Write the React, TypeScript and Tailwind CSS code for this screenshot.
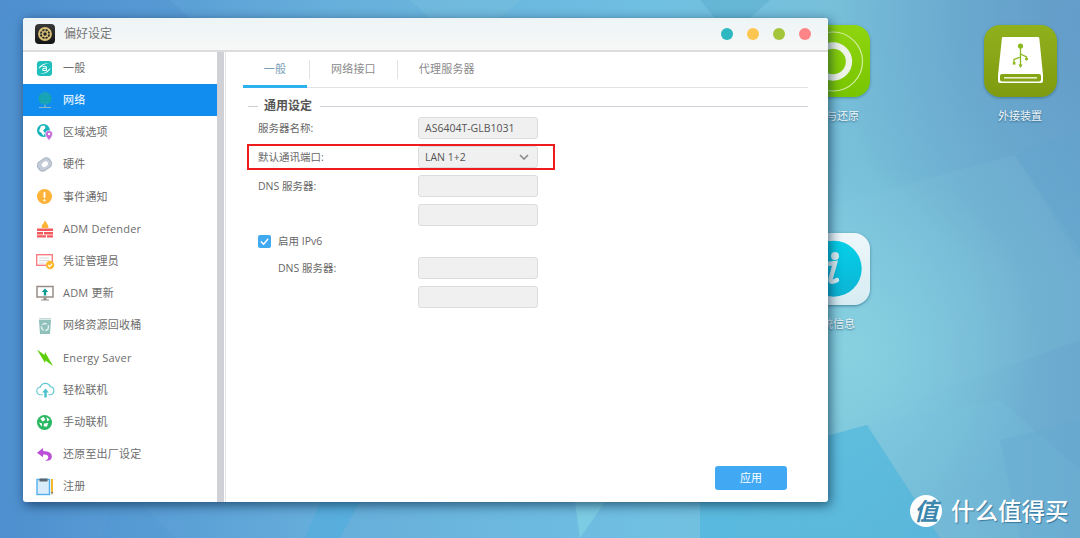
import type { ReactNode } from 'react';

const FONT = "font-['Open_Sans','Noto_Sans_CJK_SC',sans-serif]";

function Wallpaper() {
  return (
    <svg className="absolute inset-0 h-full w-full" viewBox="0 0 1080 538" preserveAspectRatio="none">
      <defs>
        <linearGradient id="wall" x1="0" y1="0" x2="1" y2="0">
          <stop offset="0" stopColor="#4e8fcf" />
          <stop offset="0.3" stopColor="#66aedb" />
          <stop offset="0.6" stopColor="#70c0e2" />
          <stop offset="0.78" stopColor="#78c0da" />
          <stop offset="1" stopColor="#6ba9ce" />
        </linearGradient>
        <radialGradient id="glow" gradientUnits="userSpaceOnUse" cx="850" cy="350" r="190">
          <stop offset="0" stopColor="#8cd8e4" stopOpacity="0.75" />
          <stop offset="1" stopColor="#8cd8e4" stopOpacity="0" />
        </radialGradient>
        <radialGradient id="shade" gradientUnits="userSpaceOnUse" cx="1080" cy="20" r="260">
          <stop offset="0" stopColor="#5f97c6" stopOpacity="0.7" />
          <stop offset="1" stopColor="#5f97c6" stopOpacity="0" />
        </radialGradient>
      </defs>
      <rect width="1080" height="538" fill="url(#wall)" />
      <rect width="1080" height="538" fill="url(#glow)" />
      <rect width="1080" height="538" fill="url(#shade)" />
      <polygon points="700,240 1015,155 1080,250 1080,340 860,420 700,440" fill="#8ccfe0" opacity="0.12" />
      <polygon points="1015,155 1080,130 1080,260" fill="#5fa5cc" opacity="0.3" />
      <polygon points="700,470 867,425 940,538 700,538" fill="#50b6dd" opacity="0.7" />
      <polygon points="867,425 1000,400 1080,470 1080,538 940,538" fill="#78c2df" opacity="0.25" />
      <polygon points="1000,440 1080,420 1080,538 1020,538" fill="#64a8d0" opacity="0.35" />
      <polygon points="115,502 140,502 175,538 100,538" fill="#4f96d2" opacity="0.25" />
      <polygon points="320,502 360,502 340,538 305,538" fill="#48aede" opacity="0.45" />
      <polygon points="575,502 605,502 580,538" fill="#8adbe8" opacity="0.5" />
      <polygon points="0,0 170,0 190,18 0,18" fill="#4e8fd2" opacity="0.3" />
      <polygon points="410,0 520,0 500,18 430,18" fill="#80c8df" opacity="0.3" />
      <polygon points="700,0 770,0 750,18 715,18" fill="#52a8c8" opacity="0.4" />
    </svg>
  );
}

function BackupIcon() {
  return (
    <div className="absolute left-[790px] top-[25px] h-[72px] w-[80px] overflow-hidden rounded-[16px] bg-gradient-to-b from-[#8fd50f] to-[#78c500] shadow-[0_1px_3px_rgba(0,60,90,0.4)]">
      <svg className="h-full w-full" viewBox="0 0 80 72">
        <circle cx="43" cy="36.5" r="29.5" fill="none" stroke="#d3eda0" strokeWidth="1.2" />
        <circle cx="43" cy="36.5" r="16" fill="none" stroke="#eef3ea" strokeWidth="6.3" />
      </svg>
    </div>
  );
}

function UsbIcon() {
  return (
    <div className="absolute left-[984px] top-[25px] h-[72px] w-[73px] rounded-[16px] bg-gradient-to-b from-[#90b01c] to-[#7f9a10] shadow-[0_1px_3px_rgba(0,60,90,0.4)]">
      <svg className="h-full w-full" viewBox="0 0 73 72">
        <path d="M18 12.5 Q18 12 19 12 H54 Q55 12 55.3 13 L59 50 V56 Q59 58 57 58 H16 Q14 58 14 56 V50 Z" fill="#fff" />
        <rect x="16" y="49" width="41" height="7.5" rx="2" fill="#86a514" />
        <rect x="20" y="52" width="33" height="1.6" fill="#e8efc8" />
        <g stroke="#8ab81e" strokeWidth="1.3" fill="#8ab81e">
          <circle cx="36.5" cy="21" r="2.6" stroke="none" />
          <path d="M36.5 22 V40 M36.5 32 L30 34.5 V38 M36.5 29 L42.5 32 V34" fill="none" />
          <rect x="28.8" y="37" width="2.6" height="2.6" stroke="none" />
          <circle cx="42.5" cy="34" r="1.6" stroke="none" />
          <path d="M34.3 39.5 H38.7 L36.5 43 Z" stroke="none" />
        </g>
      </svg>
    </div>
  );
}

function InfoIcon() {
  return (
    <div className="absolute left-[790px] top-[233px] h-[72px] w-[80px] overflow-hidden rounded-[16px] bg-gradient-to-b from-[#eef7fa] to-[#d6ecf2] shadow-[0_1px_3px_rgba(0,60,90,0.5)]">
      <svg className="h-full w-full" viewBox="0 0 80 72">
        <defs>
          <linearGradient id="infoDisc" x1="0" y1="0" x2="0" y2="1">
            <stop offset="0" stopColor="#05d0e8" />
            <stop offset="1" stopColor="#0cb4d4" />
          </linearGradient>
        </defs>
        <circle cx="43.7" cy="35.7" r="28" fill="url(#infoDisc)" />
        <circle cx="45" cy="23" r="4" fill="#dceff4" />
        <path d="M37 31 L45 30 L40.5 46 Q39.5 51 47 47" fill="none" stroke="#dceff4" strokeWidth="4.4" strokeLinecap="round" />
      </svg>
    </div>
  );
}

function DesktopLabel({ className, children }: { className: string; children: ReactNode }) {
  return (
    <span className={`absolute text-[11px] leading-4 text-[#eef6fa] [text-shadow:0_1px_2px_rgba(0,50,80,0.6)] ${className}`}>
      {children}
    </span>
  );
}

const NAV_ICONS: Record<string, ReactNode> = {
  general: (
    <svg viewBox="0 0 18 18" className="h-[17px] w-[17px]">
      <rect x="1" y="1" width="16" height="16" rx="3.5" fill="#1fc0bb" />
      <path d="M2.5 9.5 Q4 3.5 14.5 3.2 Q7 4.5 5.5 7.5 Z M15.5 8.5 Q14.5 14.5 3.5 14.8 Q11 13.5 12.8 10.5 Z" fill="#fff" />
      <path d="M7 7.3 Q9 6 10.6 7 Q11.2 7.5 11 9 V11.5 M11 8.8 Q7 8.5 7 10.2 Q7.3 11.8 11 10.8" fill="none" stroke="#fff" strokeWidth="1.1" />
    </svg>
  ),
  network: (
    <svg viewBox="0 0 18 18" className="h-[18px] w-[18px]">
      <circle cx="9" cy="7.5" r="6.5" fill="#0fa6a8" />
      <path d="M2.5 7.5 H15.5 M9 1 V14 M4 3.5 H14 M4 11.5 H14" stroke="#2a9fd0" strokeWidth="0.6" fill="none" />
      <ellipse cx="9" cy="7.5" rx="3" ry="6.5" fill="none" stroke="#2a9fd0" strokeWidth="0.6" />
      <path d="M9 14 V16 M3 16.5 H15" stroke="#8ab6c8" strokeWidth="1.2" />
    </svg>
  ),
  region: (
    <svg viewBox="0 0 18 18" className="h-[18px] w-[18px]">
      <circle cx="7.5" cy="7.5" r="6.5" fill="#17b3bd" />
      <path d="M5 3 L8.5 2.5 L9.5 5 L7 7.5 L9 10 L7.5 13 L5.5 10 L3 8 Z" fill="#fff" />
      <path d="M13 7.5 A3.6 3.6 0 0 1 16.6 11 Q16.6 13 13 17.5 Q9.4 13 9.4 11 A3.6 3.6 0 0 1 13 7.5 Z" fill="#c468d8" stroke="#fff" strokeWidth="0.6" />
      <circle cx="13" cy="11" r="1.2" fill="#fff" />
    </svg>
  ),
  hardware: (
    <svg viewBox="0 0 18 18" className="h-[17px] w-[17px]">
      <g transform="rotate(-35 9 9)">
        <rect x="1.5" y="3.5" width="15" height="11" rx="4.5" fill="#c3cbd6" stroke="#aab6c4" strokeWidth="1.2" />
        <ellipse cx="9.5" cy="9" rx="3.6" ry="2.6" fill="#fff" />
      </g>
    </svg>
  ),
  notify: (
    <svg viewBox="0 0 18 18" className="h-[17px] w-[17px]">
      <circle cx="9" cy="9" r="8" fill="#fdb338" />
      <rect x="8" y="4" width="2" height="6.5" rx="1" fill="#fff" />
      <circle cx="9" cy="13" r="1.2" fill="#fff" />
    </svg>
  ),
  defender: (
    <svg viewBox="0 0 18 18" className="h-[18px] w-[18px]">
      <path d="M6 8 Q5 5 7 4 Q8 3 8.5 0.5 Q12 3 12.5 8 Z" fill="#fdb338" />
      <path d="M1 8.5 H17 V11 H1 Z M1 12 H7 V14.5 H1 Z M8 12 H17 V14.5 H8 Z M1 15.3 H10 V17.5 H1 Z M11 15.3 H17 V17.5 H11 Z" fill="#f2595d" />
    </svg>
  ),
  cert: (
    <svg viewBox="0 0 19 18" className="h-[18px] w-[19px]">
      <rect x="0.7" y="2.7" width="15.6" height="10.6" fill="#fff" stroke="#f77e82" strokeWidth="1.4" />
      <path d="M3 6 H13 M3 8.5 H13 M3 11 H9" stroke="#d5d8dc" strokeWidth="1" />
      <circle cx="14" cy="13" r="4.2" fill="#fdb92b" />
      <path d="M12 13 L13.6 14.6 L16 11.8" fill="none" stroke="#fff" strokeWidth="1.1" />
    </svg>
  ),
  update: (
    <svg viewBox="0 0 18 18" className="h-[18px] w-[18px]">
      <rect x="1" y="2.5" width="16" height="10.5" fill="#fff" stroke="#978d86" strokeWidth="1.5" />
      <path d="M9 4.5 L12.3 8 H10.2 V11.5 H7.8 V8 H5.7 Z" fill="#0f9b94" />
      <path d="M7.5 13.5 H10.5 V15.5 H13 V16.5 H5 V15.5 H7.5 Z" fill="#978d86" />
    </svg>
  ),
  recycle: (
    <svg viewBox="0 0 18 18" className="h-[18px] w-[18px]">
      <rect x="3" y="1" width="12" height="1.6" fill="#c3dcd9" />
      <path d="M3 3 H15 L14 17 H4 Z" fill="#8fc0bb" />
      <circle cx="9" cy="10" r="3.5" fill="none" stroke="#e4f1ef" strokeWidth="1.3" strokeDasharray="5 1.5" />
    </svg>
  ),
  energy: (
    <svg viewBox="0 0 18 18" className="h-[18px] w-[18px]">
      <path d="M1 0.5 L8.5 6 L9 3 L17 17 L9.5 11.5 L9 14 Z" fill="#5fce0a" />
    </svg>
  ),
  ez: (
    <svg viewBox="0 0 20 18" className="h-[18px] w-[19px]">
      <path d="M5 14 A4 4 0 0 1 4.6 6 A5.5 5.5 0 0 1 15 5.5 A4.3 4.3 0 0 1 15.3 14 H13" fill="none" stroke="#64c9d2" strokeWidth="1.2" />
      <path d="M5 14 H7" stroke="#64c9d2" strokeWidth="1.2" />
      <path d="M10 7.5 L13.5 11.5 H11.3 V17 H8.7 V11.5 H6.5 Z" fill="#4cc3cc" />
    </svg>
  ),
  manual: (
    <svg viewBox="0 0 18 18" className="h-[17px] w-[17px]">
      <circle cx="9" cy="9" r="8" fill="#2ab862" />
      <path d="M4.5 5 L8 3 L10 6 L7 8 Z M11 3 L14.5 6 L12 8 Z M3 9 L6.5 10 L6 13.5 Z M8.5 10 L13 9.5 L11.5 13.5 L8 13 Z" fill="#fff" />
    </svg>
  ),
  reset: (
    <svg viewBox="0 0 18 18" className="h-[17px] w-[17px]">
      <path d="M7.5 2 L1 7.2 L7.5 12 V9 Q13 8.5 13 12 Q13 14.5 9.5 15.5 Q16.5 16.5 16.8 11 Q17 5.8 7.5 5.3 Z" fill="#bc4fd8" />
    </svg>
  ),
  register: (
    <svg viewBox="0 0 18 18" className="h-[18px] w-[18px]">
      <rect x="1" y="1.5" width="12.5" height="15" fill="#d9ecfa" stroke="#53aef0" strokeWidth="1.4" />
      <rect x="3.5" y="0.5" width="8" height="3" fill="#5a6670" />
      <rect x="15" y="1" width="2" height="13" fill="#f6b92e" />
      <path d="M15 14 H17 L16 17 Z" fill="#7a6a50" />
    </svg>
  ),
};

const NAV_ITEMS = [
  { key: 'general', label: '一般' },
  { key: 'network', label: '网络', active: true },
  { key: 'region', label: '区域选项' },
  { key: 'hardware', label: '硬件' },
  { key: 'notify', label: '事件通知' },
  { key: 'defender', label: 'ADM Defender' },
  { key: 'cert', label: '凭证管理员' },
  { key: 'update', label: 'ADM 更新' },
  { key: 'recycle', label: '网络资源回收桶' },
  { key: 'energy', label: 'Energy Saver' },
  { key: 'ez', label: '轻松联机' },
  { key: 'manual', label: '手动联机' },
  { key: 'reset', label: '还原至出厂设定' },
  { key: 'register', label: '注册' },
];

function Sidebar() {
  return (
    <div className="flex w-[194px] shrink-0 flex-col">
      {NAV_ITEMS.map((item) => (
        <div
          key={item.key}
          className={`flex h-[32.2px] shrink-0 items-center pl-[13px] text-[11px] tracking-[0.2px] ${
            item.active ? 'bg-[#118df0] text-white' : 'text-[#6d6d6d]'
          }`}
        >
          <span className="flex w-[27px] shrink-0 items-center">{NAV_ICONS[item.key]}</span>
          {item.label}
        </div>
      ))}
    </div>
  );
}

function Field({ value, select }: { value?: string; select?: boolean }) {
  return (
    <div className="flex h-[22px] w-[120px] items-center justify-between rounded-[3px] border border-[#dcdcdc] bg-[#f0f0f0] pl-[6px] pr-[8px] pt-[2px] text-[10.5px] text-[#555]">
      <span>{value}</span>
      {select && (
        <svg viewBox="0 0 10 6" className="mb-[3px] h-[6px] w-[10px]">
          <path d="M1 1 L5 5 L9 1" fill="none" stroke="#8a8a8a" strokeWidth="1.6" />
        </svg>
      )}
    </div>
  );
}

function FormRow({ label, indent, value, select }: { label?: string; indent?: boolean; value?: string; select?: boolean }) {
  return (
    <div className="flex items-center">
      <span className={`w-[160px] shrink-0 pt-[2px] text-[10.5px] text-[#666] ${indent ? 'pl-[20px]' : ''}`}>{label}</span>
      <Field value={value} select={select} />
    </div>
  );
}

function Content() {
  return (
    <div className="flex min-w-0 flex-1 flex-col pl-[17px] pr-[20px]">
      <div className="flex h-[36px] shrink-0 items-stretch border-b border-[#e2e2e2] text-[11px] tracking-[0.2px] text-[#8a8a8a]">
        <div className="relative flex w-[64px] items-center justify-center text-[#7aa0b8]">
          一般
          <span className="absolute inset-x-0 -bottom-px h-[3px] bg-[#2db0ee]" />
        </div>
        <div className="ml-[2px] flex items-center py-[8px]">
          <span className="flex h-full items-center border-l border-[#e2e2e2] px-[21px]">网络接口</span>
          <span className="flex h-full items-center border-l border-[#e2e2e2] px-[21px]">代理服务器</span>
        </div>
      </div>

      <div className="mt-[9px] flex items-center">
        <span className="ml-[5px] h-px w-[10px] bg-[#cfcfcf]" />
        <span className="ml-[6px] mr-[8px] text-[12px] font-semibold text-[#555]">通用设定</span>
        <span className="h-px flex-1 bg-[#d5d0dc]" />
      </div>

      <div className="mt-[2px] flex flex-col pl-[15px]">
        <FormRow label="服务器名称:" value="AS6404T-GLB1031" />
        <div className="relative mt-[7px]">
          <span className="absolute -left-[11px] -top-[2px] h-[26px] w-[308px] border-2 border-[#ee1c1c]" />
          <FormRow label="默认通讯端口:" value="LAN 1+2" select />
        </div>
        <div className="mt-[7px]">
          <FormRow label="DNS 服务器:" />
        </div>
        <div className="mt-[7px]">
          <FormRow />
        </div>
        <div className="mt-[9px] flex h-[13px] items-center">
          <span className="flex h-[13px] w-[13px] items-center justify-center rounded-[2px] bg-[#41a9f0]">
            <svg viewBox="0 0 12 12" className="h-[11px] w-[11px]">
              <path d="M2 6 L5 9 L10 3" fill="none" stroke="#fff" strokeWidth="1.5" />
            </svg>
          </span>
          <span className="ml-[7px] text-[10.5px] text-[#666]">启用 IPv6</span>
        </div>
        <div className="mt-[9px]">
          <FormRow label="DNS 服务器:" indent />
        </div>
        <div className="mt-[7px]">
          <FormRow indent />
        </div>
      </div>

      <div className="mt-auto mb-[12px] flex justify-end pr-[21px]">
        <button type="button" className="h-[24px] w-[72px] rounded-[3px] bg-[#41a9f3] text-[11px] text-white">
          应用
        </button>
      </div>
    </div>
  );
}

export default function App() {
  return (
    <div className={`relative h-[538px] w-[1080px] overflow-hidden ${FONT}`}>
      <Wallpaper />
      <BackupIcon />
      <UsbIcon />
      <InfoIcon />
      <DesktopLabel className="left-[826px] top-[108px]">与还原</DesktopLabel>
      <DesktopLabel className="left-[998px] top-[108px]">外接装置</DesktopLabel>
      <DesktopLabel className="left-[822px] top-[316px]">统信息</DesktopLabel>

      <div className="absolute left-[23px] top-[18px] flex h-[484px] w-[805px] flex-col overflow-hidden rounded-[3px] bg-white shadow-[2px_3px_12px_rgba(0,30,60,0.65)]">
        <div className="flex h-[34px] shrink-0 items-center border-b-2 border-[#dcdcdc] bg-gradient-to-b from-[#eef4f6] to-[#f7f7f7] pl-[12px] pr-[17px]">
          <span className="flex h-[20px] w-[20px] items-center justify-center rounded-[4px] bg-gradient-to-b from-[#3a3a3a] to-[#141414]">
            <svg viewBox="0 0 16 16" className="h-[16px] w-[16px]">
              <circle cx="8" cy="8" r="6" fill="none" stroke="#d8c078" strokeWidth="1.8" />
              <circle cx="8" cy="8" r="2.4" fill="none" stroke="#d8c078" strokeWidth="1.4" />
              <path d="M8 2 V5.6 M8 10.4 V14 M2 8 H5.6 M10.4 8 H14 M3.8 3.8 L6.3 6.3 M9.7 9.7 L12.2 12.2 M12.2 3.8 L9.7 6.3 M6.3 9.7 L3.8 12.2" stroke="#d8c078" strokeWidth="1.1" />
            </svg>
          </span>
          <span className="ml-[9px] text-[12px] text-[#777]">偏好设定</span>
          <div className="ml-auto flex gap-[14px]">
            <span className="h-[12px] w-[12px] rounded-full bg-[#2db7c0]" />
            <span className="h-[12px] w-[12px] rounded-full bg-[#fdc650]" />
            <span className="h-[12px] w-[12px] rounded-full bg-[#a3c63d]" />
            <span className="h-[12px] w-[12px] rounded-full bg-[#fd8587]" />
          </div>
        </div>
        <div className="flex min-h-0 flex-1">
          <Sidebar />
          <div className="w-[8px] shrink-0 border-r border-[#fff] bg-[#cfd1d6]" />
          <div className="w-[1px] shrink-0 bg-[#e4e4e4]" />
          <Content />
        </div>
      </div>

      <div className="absolute left-[910px] top-[495px] flex h-[32px] w-[32px] items-center justify-center rounded-full bg-white text-[24px] leading-none font-semibold italic text-[#3c87ad]">
        值
      </div>
      <span className="absolute left-[951px] top-[495px] text-[23.5px] leading-[32px] font-medium text-white [text-shadow:1px_1px_1px_rgba(20,80,120,0.6)]">
        什么值得买
      </span>
    </div>
  );
}
